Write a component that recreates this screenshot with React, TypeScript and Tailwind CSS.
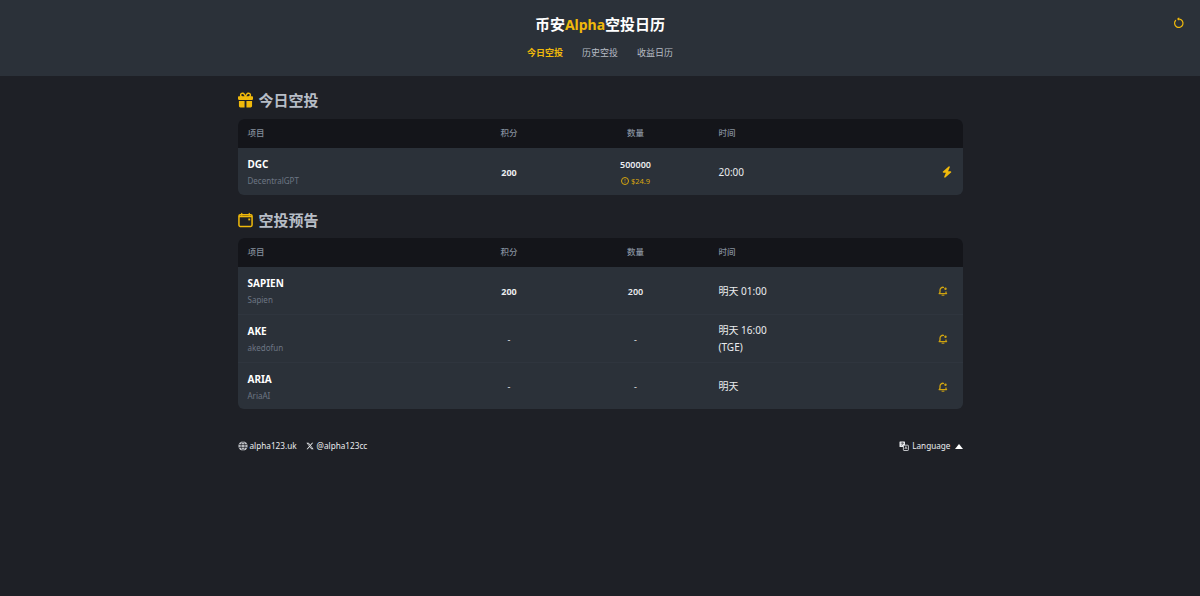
import type React from "react";
import { FaGift, FaBolt, FaXTwitter } from "react-icons/fa6";

const FONT = "font-['Noto_Sans','Noto_Sans_CJK_SC',sans-serif]";
const GRID = "grid grid-cols-[217px_109px_144px_1fr_60px] items-center";

type Row = {
  symbol: string;
  name: string;
  points: string;
  amount: string;
  value?: string;
  time: string;
  note?: string;
  today?: boolean;
};

const TODAY: Row[] = [
  { symbol: "DGC", name: "DecentralGPT", points: "200", amount: "500000", value: "$24.9", time: "20:00", today: true },
];

const UPCOMING: Row[] = [
  { symbol: "SAPIEN", name: "Sapien", points: "200", amount: "200", time: "明天 01:00" },
  { symbol: "AKE", name: "akedofun", points: "-", amount: "-", time: "明天 16:00", note: "(TGE)" },
  { symbol: "ARIA", name: "AriaAI", points: "-", amount: "-", time: "明天" },
];

function RefreshIcon() {
  return (
    <svg width="12" height="12" viewBox="0 0 12 12" fill="none" className="text-[#f0b90b]">
      <path d="M6.500 2.100A4.200 4.200 0 1 1 2.600 3.500" stroke="currentColor" strokeWidth="1.200" strokeLinecap="round" />
      <path d="M6.200 .3v3.500L3.900 2.100Z" fill="currentColor" />
    </svg>
  );
}

function CalendarIcon() {
  return (
    <svg width="16" height="16" viewBox="0 0 16 16" fill="none" className="text-[#f0b90b]">
      <rect x="1" y="2.400" width="14" height="12.400" rx="1.400" stroke="currentColor" strokeWidth="1.600" />
      <path d="M1 4.300h14" stroke="currentColor" strokeWidth="1.600" />
      <path d="M4 .8v2M12 .8v2" stroke="currentColor" strokeWidth="1.300" strokeLinecap="round" />
      <rect x="11" y="6.400" width="2" height="2" fill="currentColor" />
    </svg>
  );
}

function RemindIcon() {
  return (
    <svg width="10" height="10" viewBox="0 0 10 10" fill="none" className="text-[#d0a410]">
      <path d="M5.400 1.300A3 3 0 0 0 2 4.300V6.200L1.200 7.600H8.600" stroke="currentColor" strokeWidth="1.300" strokeLinecap="round" strokeLinejoin="round" />
      <path d="M8 5.400v2" stroke="currentColor" strokeWidth="1.200" />
      <path d="M4 9.200h2" stroke="currentColor" strokeWidth="1" strokeLinecap="round" />
      <circle cx="7.500" cy="2.800" r="1.200" fill="currentColor" />
    </svg>
  );
}

function GlobeIcon() {
  return (
    <svg width="10" height="10" viewBox="0 0 10 10" className="text-[#c4c7cc]">
      <circle cx="5" cy="5" r="4.600" fill="currentColor" />
      <path d="M.8 3.600h8.400M.8 6.400h8.400M5 .5C2.400 3 2.400 7 5 9.500M5 .5c2.600 2.500 2.600 6.500 0 9" stroke="#1e2026" strokeWidth=".7" fill="none" />
    </svg>
  );
}

function LanguageIcon() {
  return (
    <svg width="10" height="10" viewBox="0 0 10 10" fill="none" className="text-[#eaecef]">
      <rect x="0.500" y="0.500" width="5.500" height="5.500" rx=".6" fill="currentColor" />
      <path d="M1.800 2.200h3M3.300 1.400v.8M2.200 4.400c1-.5 1.600-1.200 2-2.200" stroke="#1e2026" strokeWidth=".6" />
      <rect x="4.400" y="4.200" width="5" height="5.300" rx=".6" fill="#1e2026" stroke="currentColor" strokeWidth=".8" />
      <path d="M5.800 8 6.900 5.500 8 8M6.200 7.200h1.400" stroke="currentColor" strokeWidth=".6" />
    </svg>
  );
}

function TableBlock({ rows }: { rows: Row[] }) {
  return (
    <div className="overflow-hidden rounded-md bg-[#2b3139]">
      <div className={`${GRID} h-[28.500px] bg-[#14151a] text-[8.500px] font-medium text-[#848e9c]`}>
        <div className="pl-2.5">项目</div>
        <div className="text-center">积分</div>
        <div className="text-center">数量</div>
        <div className="pl-[11px]">时间</div>
        <div />
      </div>
      {rows.map((row, i) => (
        <div key={row.symbol} className={`${GRID} ${i > 0 ? "border-t border-[#2f353e]" : ""} h-[47.500px] pt-[2px] text-[#eaecef]`}>
          <div className="pl-2.5">
            <div className="text-[10px] leading-[14px] font-bold text-white">{row.symbol}</div>
            <div className="mt-[4px] text-[8px] leading-[12px] text-[#6d7684]">{row.name}</div>
          </div>
          <div className={`text-center text-[9px] ${row.points === "-" ? "font-normal" : "font-bold"}`}>{row.points}</div>
          <div className="text-center">
            <div className={`text-[9px] leading-[13px] ${row.amount === "-" ? "font-normal" : "font-semibold"}`}>{row.amount}</div>
            {row.value && (
              <div className="mt-[4px] flex items-center justify-center gap-[2px] text-[7.500px] leading-[12px] text-[#d9a70e]">
                <span className="flex h-[8px] w-[8px] items-center justify-center rounded-full border border-[#d9a70e] text-[6px] leading-none">!</span>
                {row.value}
              </div>
            )}
          </div>
          <div className="pl-[11px] text-[10px] leading-[17px]">
            <div>{row.time}</div>
            {row.note && <div>{row.note}</div>}
          </div>
          <div className={`flex justify-end ${row.today ? "pr-[11px]" : "pr-[15px]"}`}>
            {row.today ? <FaBolt className="h-[12px] w-[10px] text-[#f0b90b]" /> : <RemindIcon />}
          </div>
        </div>
      ))}
    </div>
  );
}

function SectionTitle({ icon, children }: { icon: React.ReactNode; children: React.ReactNode }) {
  return (
    <h2 className="flex h-[24px] items-center gap-[6px] text-[15px] font-bold text-[#b7bdc6]">
      <span className="flex w-[15px] justify-center">{icon}</span>
      {children}
    </h2>
  );
}

export default function App() {
  return (
    <div className={`${FONT} min-h-[596px] bg-[#1e2026]`}>
      <header className="relative h-[76px] bg-[#2b3139] pt-[13px] text-center">
        <h1 className="text-[15px] leading-[22px] font-bold text-white">
          币安<span className="text-[14px] text-[#f0b90b]">Alpha</span>空投日历
        </h1>
        <nav className="mt-[10px] flex justify-center gap-[19px] text-[9px] leading-[14px] text-[#b7bdc6]">
          <span className="font-bold text-[#f0b90b]">今日空投</span>
          <span>历史空投</span>
          <span>收益日历</span>
        </nav>
        <button className="absolute top-[17px] right-[15px]">
          <RefreshIcon />
        </button>
      </header>

      <main className="mx-auto w-[725px] pt-[12px]">
        <SectionTitle icon={<FaGift className="h-[16px] w-[16px] text-[#f0b90b]" />}>今日空投</SectionTitle>
        <div className="mt-[7px]">
          <TableBlock rows={TODAY} />
        </div>

        <div className="mt-[13px]">
          <SectionTitle icon={<CalendarIcon />}>空投预告</SectionTitle>
        </div>
        <div className="mt-[6px]">
          <TableBlock rows={UPCOMING} />
        </div>

        <footer className="mt-[31px] flex items-center justify-between text-[8.200px] text-[#eaecef]">
          <div className="flex items-center gap-[9px]">
            <span className="flex items-center gap-[2px]">
              <GlobeIcon />
              alpha123.uk
            </span>
            <span className="flex items-center gap-[3px]">
              <FaXTwitter className="h-[8px] w-[8px]" />
              @alpha123cc
            </span>
          </div>
          <div className="flex items-center gap-[3px]">
            <LanguageIcon />
            Language
            <svg width="8" height="5" viewBox="0 0 8 5" className="ml-[1px] text-white">
              <path d="M4 0 8 5H0Z" fill="currentColor" />
            </svg>
          </div>
        </footer>
      </main>
    </div>
  );
}
